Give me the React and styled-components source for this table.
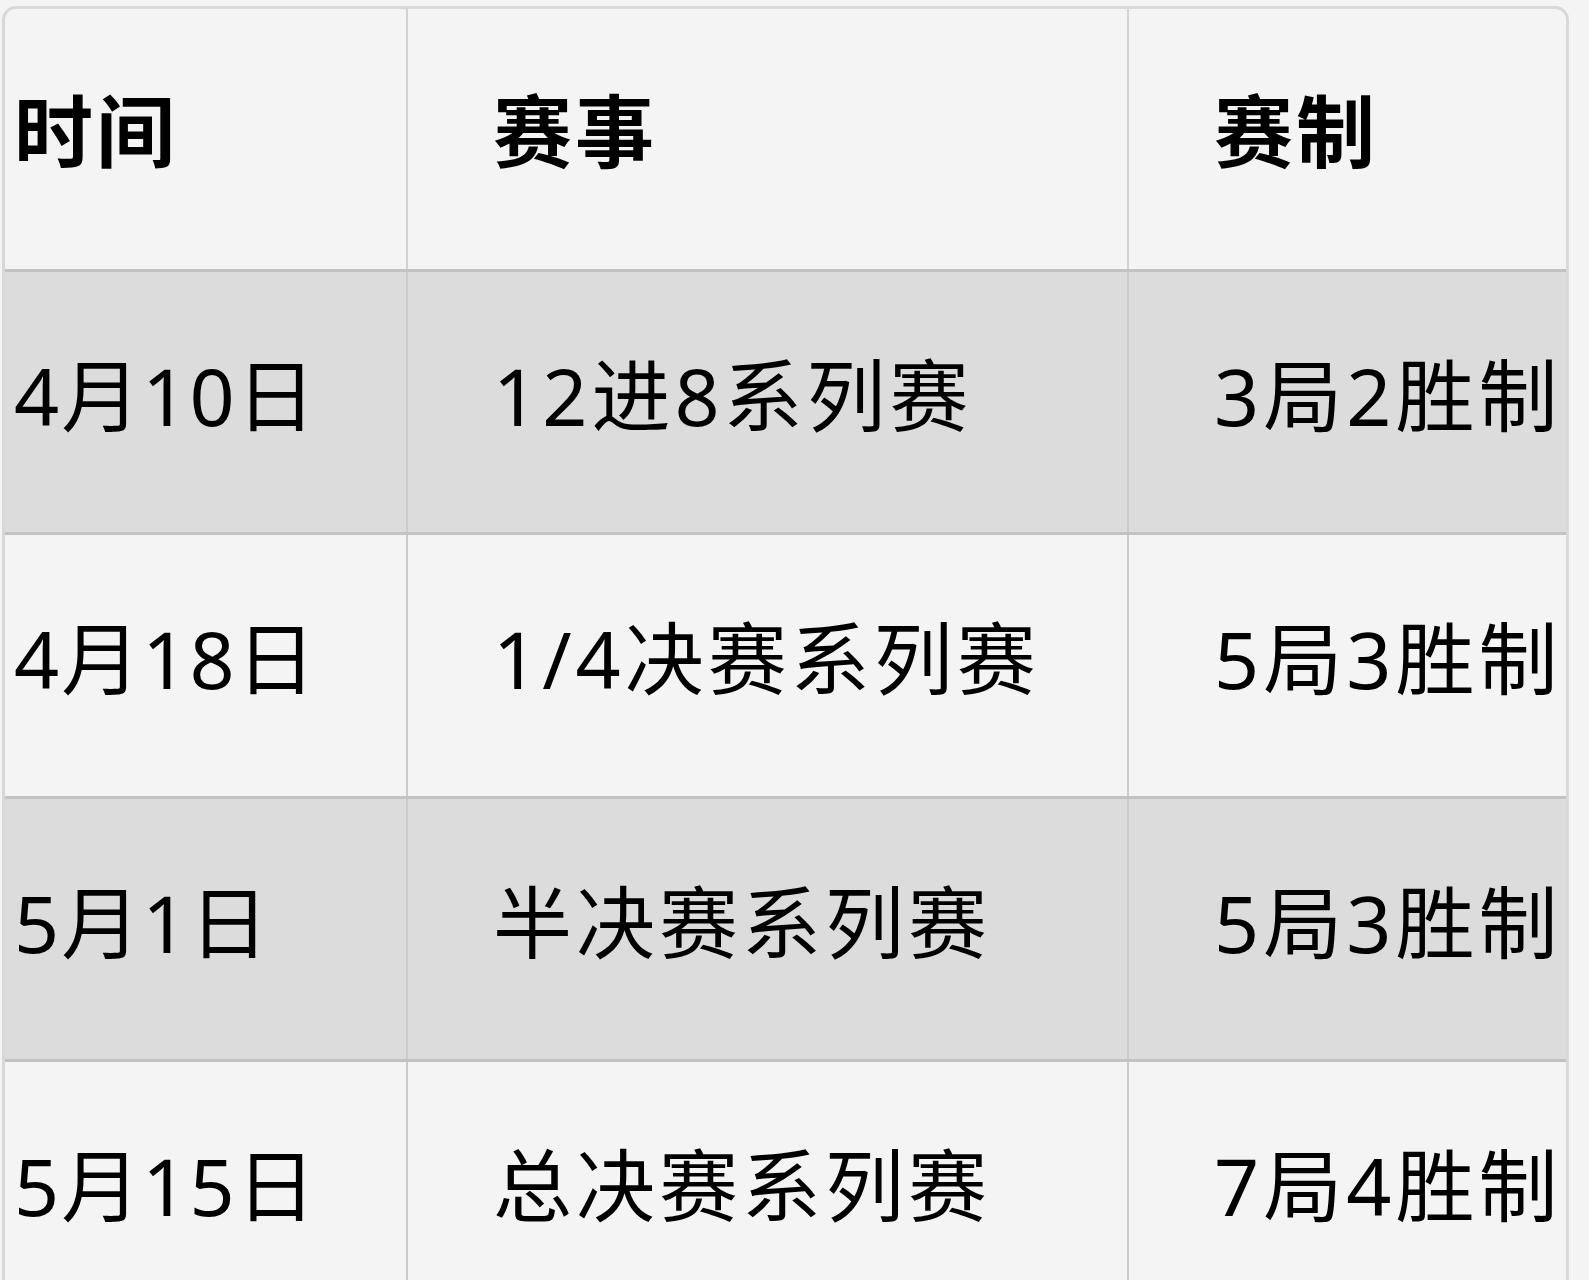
import { styled, createGlobalStyle } from "styled-components";

const GlobalStyle = createGlobalStyle`
  html, body {
    margin: 0;
    padding: 0;
    background: #f4f4f4;
  }
  body {
    font-family: "Noto Sans", "Noto Sans CJK SC", sans-serif;
    color: #000;
  }
`;

const rounds = [
  { date: "4月10日", event: "12进8系列赛", format: "3局2胜制" },
  { date: "4月18日", event: "1/4决赛系列赛", format: "5局3胜制" },
  { date: "5月1日", event: "半决赛系列赛", format: "5局3胜制" },
  { date: "5月15日", event: "总决赛系列赛", format: "7局4胜制" },
];

const App = () => {
  return (
    <>
      <GlobalStyle />
      <Page>
        <Frame>
          <Table>
            <colgroup>
              <Col $width="402px" />
              <Col $width="721px" />
              <Col />
            </colgroup>
            <thead>
              <tr>
                <HeadCell $first>时间</HeadCell>
                <HeadCell>赛事</HeadCell>
                <HeadCell>赛制</HeadCell>
              </tr>
            </thead>
            <tbody>
              {rounds.map((r, i) => (
                <Row key={r.date} $striped={i % 2 === 0}>
                  <Cell $first>{r.date}</Cell>
                  <Cell>{r.event}</Cell>
                  <Cell>{r.format}</Cell>
                </Row>
              ))}
            </tbody>
          </Table>
        </Frame>
      </Page>
    </>
  );
};
export default App;

const Page = styled.div`
  width: 1589px;
  height: 1280px;
  overflow: hidden;
  padding: 6px 0 0 2px;
  box-sizing: border-box;
`;

const Frame = styled.div`
  width: 1567px;
  box-sizing: border-box;
  border: 3px solid #d8d8d8;
  border-bottom: none;
  border-radius: 14px 14px 0 0;
  overflow: hidden;
  background: #f4f4f4;
`;

const Table = styled.table`
  width: 100%;
  table-layout: fixed;
  border-collapse: collapse;
`;

const Col = styled.col`
  width: ${({ $width }) => $width || "auto"};
`;

const HeadCell = styled.th`
  height: 261px;
  box-sizing: border-box;
  padding: 0 0 14px ${({ $first }) => ($first ? "9px" : "85px")};
  text-align: left;
  font-size: 79px;
  font-weight: 700;
  letter-spacing: 3px;
  line-height: 1;
  vertical-align: middle;
  border-bottom: 3px solid #c2c2c2;
  border-left: ${({ $first }) => ($first ? "none" : "2px solid #d2d2d2")};
  white-space: nowrap;
`;

const Row = styled.tr`
  background: ${({ $striped }) => ($striped ? "#dcdcdc" : "#f4f4f4")};
`;

const Cell = styled.td`
  height: 263.5px;
  box-sizing: border-box;
  padding: 0 0 13px ${({ $first }) => ($first ? "9px" : "85px")};
  font-size: 79px;
  font-weight: 400;
  letter-spacing: ${({ $first }) => ($first ? "2px" : "4px")};
  line-height: 1;
  vertical-align: middle;
  border-bottom: 3px solid #c2c2c2;
  border-left: ${({ $first }) => ($first ? "none" : "2px solid #cbcbcb")};
  white-space: nowrap;
`;
